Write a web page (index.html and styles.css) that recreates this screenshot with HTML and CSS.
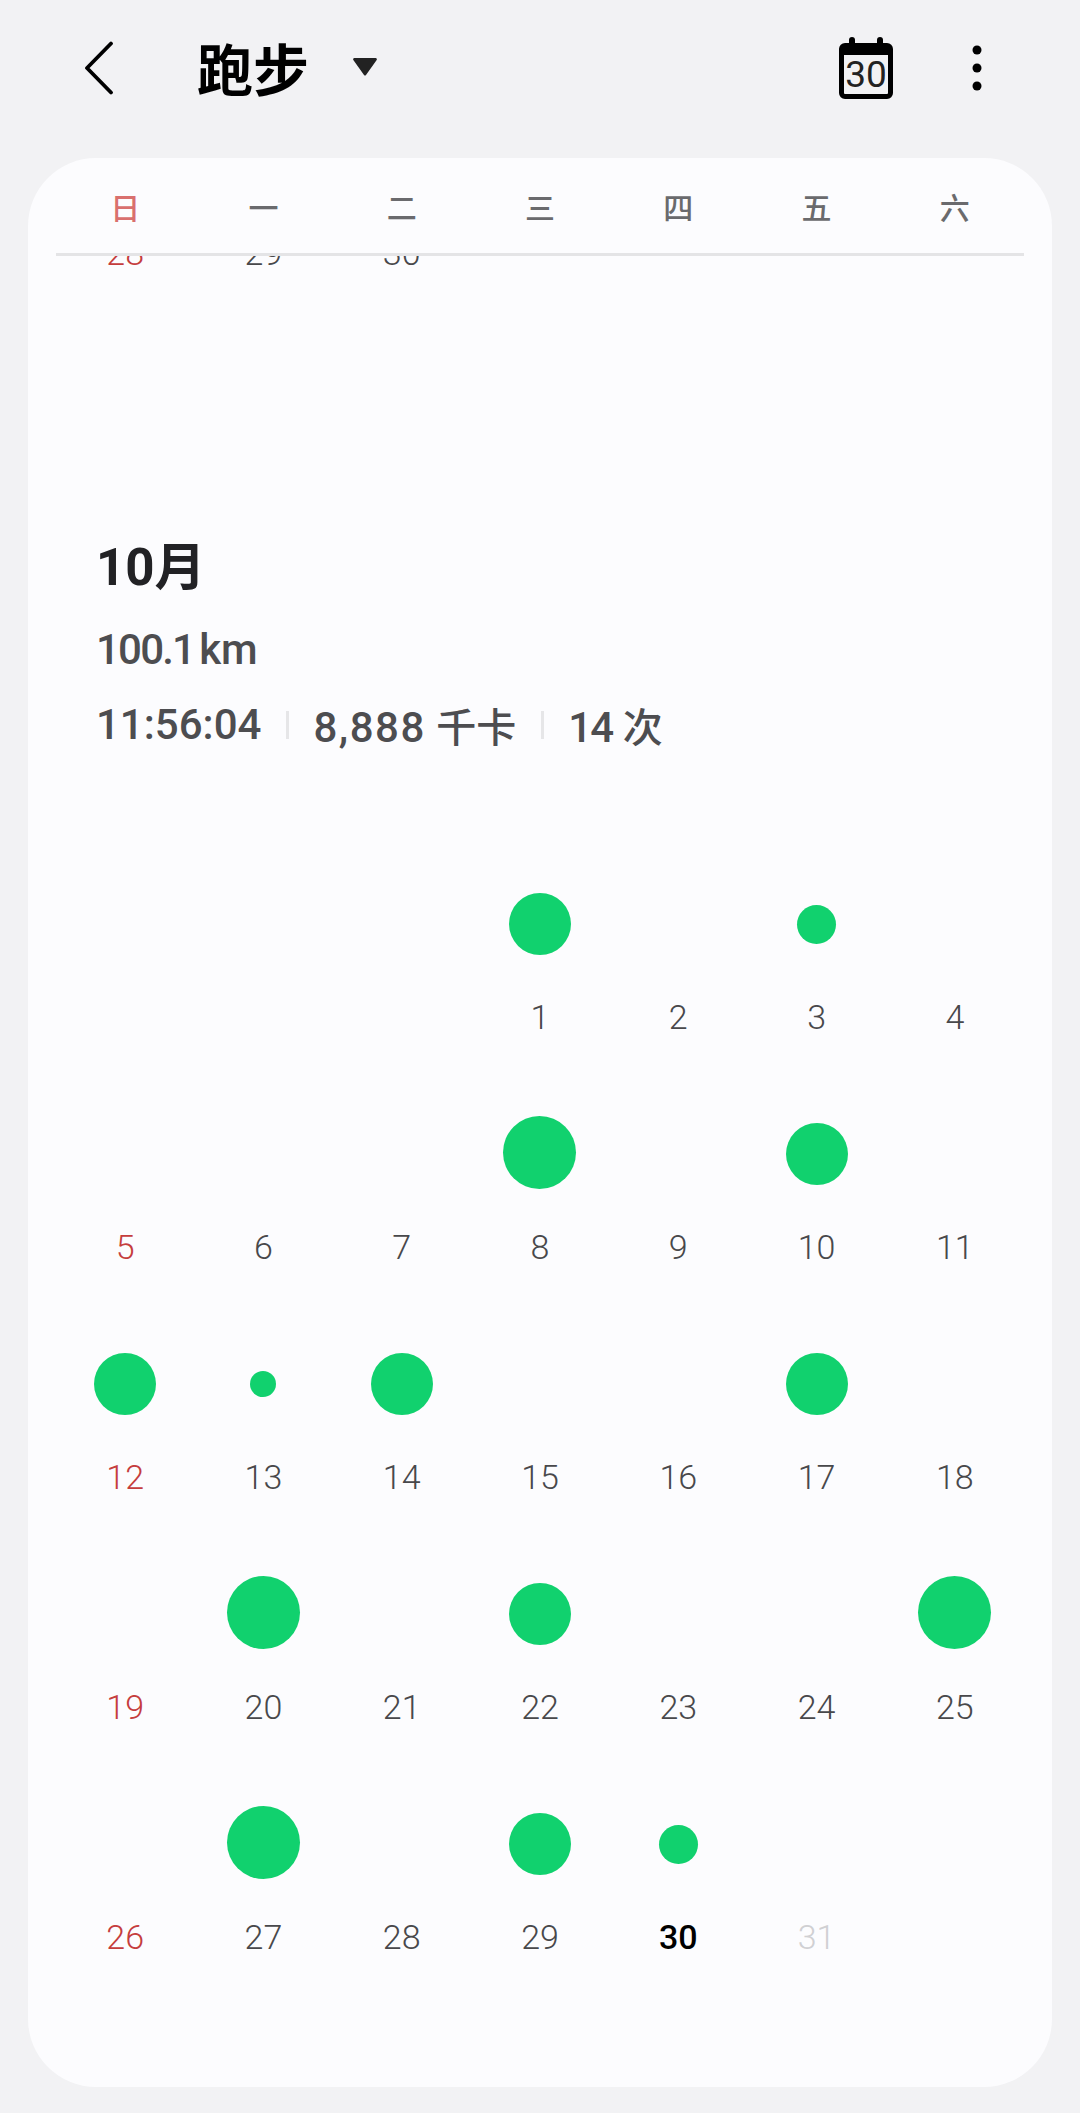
FILE: index.html
```html
<!DOCTYPE html>
<html lang="zh">
<head>
<meta charset="utf-8">
<title>跑步</title>
<link rel="stylesheet" href="styles.css">
</head>
<body>
<header class="topbar">
  <svg class="back" viewBox="0 0 30 54" width="30" height="54"><path d="M27 2.500 3 27l24 24.500" fill="none" stroke="#000" stroke-width="3.800" stroke-linecap="round" stroke-linejoin="round"/></svg>
  <h1 class="title">跑步</h1>
  <svg class="caret" viewBox="0 0 24 18" width="24" height="18"><path d="M1.500 0h21a1.300 1.300 0 0 1 1 2.200L13 17a1.300 1.300 0 0 1-2 0L.5 2.200A1.300 1.300 0 0 1 1.500 0z" fill="#222"/></svg>
  <div class="spacer"></div>
  <svg class="cal" viewBox="0 0 56 62" width="56" height="62">
    <path d="M7 6h42a6 6 0 0 1 6 6v44a6 6 0 0 1-6 6H7a6 6 0 0 1-6-6V12a6 6 0 0 1 6-6zm-1 12v38a1 1 0 0 0 1 1h42a1 1 0 0 0 1-1V18z" fill="#000" fill-rule="evenodd"/>
    <rect x="11" y="0" width="6" height="10" rx="3" fill="#000"/>
    <rect x="39" y="0" width="6" height="10" rx="3" fill="#000"/>
    <text class="cal-num" x="28" y="50" text-anchor="middle">30</text>
  </svg>
  <svg class="more" viewBox="0 0 10 46" width="10" height="46"><circle cx="5" cy="5" r="4.500"/><circle cx="5" cy="23" r="4.500"/><circle cx="5" cy="41" r="4.500"/></svg>
</header>

<main class="card">
  <div class="weekdays">
    <span class="wd wd-sun">日</span><span class="wd">一</span><span class="wd">二</span><span class="wd">三</span><span class="wd">四</span><span class="wd">五</span><span class="wd">六</span>
  </div>
  <div class="prev-row">
    <span class="num sun">28</span><span class="num">29</span><span class="num">30</span>
  </div>

  <section class="summary">
    <h2 class="month">10月</h2>
    <p class="dist"><span class="narrow">100.1</span><span class="thin"> </span>km</p>
    <div class="stats">
      <span class="stat">11:56:04</span>
      <i class="sep"></i>
      <span class="stat stat-low"><span class="wide">8,888</span> <span class="unit">千卡</span></span>
      <i class="sep"></i>
      <span class="stat stat-low"><span class="narrow">14</span> <span class="unit">次</span></span>
    </div>
  </section>

  <div class="grid">
    <div class="cell"></div><div class="cell"></div><div class="cell"></div>
    <div class="cell"><div class="slot"><i class="dot m"></i></div><span class="num">1</span></div>
    <div class="cell"><div class="slot"></div><span class="num">2</span></div>
    <div class="cell"><div class="slot"><i class="dot s"></i></div><span class="num">3</span></div>
    <div class="cell"><div class="slot"></div><span class="num">4</span></div>

    <div class="cell"><div class="slot"></div><span class="num sun">5</span></div>
    <div class="cell"><div class="slot"></div><span class="num">6</span></div>
    <div class="cell"><div class="slot"></div><span class="num">7</span></div>
    <div class="cell"><div class="slot"><i class="dot l"></i></div><span class="num">8</span></div>
    <div class="cell"><div class="slot"></div><span class="num">9</span></div>
    <div class="cell"><div class="slot"><i class="dot m"></i></div><span class="num">10</span></div>
    <div class="cell"><div class="slot"></div><span class="num">11</span></div>

    <div class="cell"><div class="slot"><i class="dot m"></i></div><span class="num sun">12</span></div>
    <div class="cell"><div class="slot"><i class="dot xs"></i></div><span class="num">13</span></div>
    <div class="cell"><div class="slot"><i class="dot m"></i></div><span class="num">14</span></div>
    <div class="cell"><div class="slot"></div><span class="num">15</span></div>
    <div class="cell"><div class="slot"></div><span class="num">16</span></div>
    <div class="cell"><div class="slot"><i class="dot m"></i></div><span class="num">17</span></div>
    <div class="cell"><div class="slot"></div><span class="num">18</span></div>

    <div class="cell"><div class="slot"></div><span class="num sun">19</span></div>
    <div class="cell"><div class="slot"><i class="dot l"></i></div><span class="num">20</span></div>
    <div class="cell"><div class="slot"></div><span class="num">21</span></div>
    <div class="cell"><div class="slot"><i class="dot m"></i></div><span class="num">22</span></div>
    <div class="cell"><div class="slot"></div><span class="num">23</span></div>
    <div class="cell"><div class="slot"></div><span class="num">24</span></div>
    <div class="cell"><div class="slot"><i class="dot l"></i></div><span class="num">25</span></div>

    <div class="cell"><div class="slot"></div><span class="num sun">26</span></div>
    <div class="cell"><div class="slot"><i class="dot l"></i></div><span class="num">27</span></div>
    <div class="cell"><div class="slot"></div><span class="num">28</span></div>
    <div class="cell"><div class="slot"><i class="dot m"></i></div><span class="num">29</span></div>
    <div class="cell"><div class="slot"><i class="dot s"></i></div><span class="num today">30</span></div>
    <div class="cell"><div class="slot"></div><span class="num future">31</span></div>
    <div class="cell"></div>
  </div>
</main>
</body>
</html>
```
FILE: styles.css
```css
* { box-sizing: border-box; }
html, body { margin: 0; padding: 0; }
body {
  width: 1080px;
  height: 2113px;
  background: #f2f2f4;
  font-family: Roboto, "Noto Sans CJK SC", sans-serif;
  overflow: hidden;
}
.topbar {
  height: 158px;
  display: flex;
  align-items: center;
  padding: 0 98px 18px 84px;
}
.back { margin-bottom: 4px; flex: none; }
.title {
  margin: 0 0 0 83px;
  font-family: "Noto Sans CJK SC", sans-serif;
  font-size: 56px;
  line-height: 70px;
  font-weight: 700;
  color: #000;
  padding-bottom: 6px;
}
.caret { margin-left: 44px; margin-bottom: 6px; flex: none; }
.spacer { flex: 1; }
.cal { margin-bottom: 4px; flex: none; }
.cal-num { font-family: Roboto, sans-serif; font-size: 37px; font-weight: 400; fill: #222; }
.more { margin-left: 78px; flex: none; fill: #000; margin-bottom: 4px; }

.card {
  margin: 0 28px;
  height: 1929px;
  background: #fcfcfe;
  border-radius: 68px;
  padding: 0 28px;
  overflow: hidden;
}
.weekdays {
  display: grid;
  grid-template-columns: repeat(7, 1fr);
  height: 98px;
  align-items: center;
  border-bottom: 3px solid #e4e4e6;
}
.wd {
  text-align: center;
  font-family: "Noto Sans CJK SC", sans-serif;
  font-size: 30px;
  line-height: 40px;
  font-weight: 500;
  color: #6a6a6d;
}
.wd-sun { color: #d9706e; }
.prev-row {
  display: grid;
  grid-template-columns: repeat(7, 1fr);
  grid-template-rows: 10px;
  height: 10px;
  overflow: hidden;
  align-items: end;
}
.num {
  display: block;
  text-align: center;
  font-size: 34px;
  line-height: 40px;
  font-weight: 350;
  color: #48484b;
}
.prev-row .num { line-height: 26px; height: 26px; }
.sun { color: #c53d3d; }
.today { color: #000; font-weight: 500; }
.future { color: #d0d0d3; }

.summary { padding: 0 0 0 40px; margin-top: 272px; }
.month {
  margin: 0;
  font-size: 51px;
  line-height: 60px;
  font-weight: 700;
  color: #222225;
  font-family: Roboto, "Noto Sans CJK SC", sans-serif;
}
.dist {
  margin: 27px 0 0;
  font-size: 42px;
  line-height: 50px;
  font-weight: 500;
  color: #4d4d50;
}
.thin { font-size: 20px; }
.narrow { letter-spacing: -1.800px; }
.wide { letter-spacing: 1.500px; }
.unit { font-size: 40px; }
.stats {
  margin-top: 18px;
  display: flex;
  align-items: flex-start;
  height: 56px;
  color: #4d4d50;
  font-size: 42px;
  line-height: 50px;
  font-weight: 500;
}
.stat { display: block; }
.stat-low { padding-top: 3px; }
.sep {
  width: 3px;
  height: 28px;
  margin: 11px 24px 0 25px;
  background: #e6e6e8;
}

.grid {
  margin-top: 131px;
  display: grid;
  grid-template-columns: repeat(7, 1fr);
  grid-auto-rows: 230px;
}
.cell { display: flex; flex-direction: column; align-items: center; }
.slot {
  height: 74px;
  width: 100%;
  display: flex;
  align-items: center;
  justify-content: center;
  margin-bottom: 36px;
}
.dot { display: block; border-radius: 50%; background: #11d16e; }
.l { width: 73px; height: 73px; margin-bottom: 3px; }
.m { width: 62px; height: 62px; }
.s { width: 39px; height: 39px; }
.xs { width: 26px; height: 26px; }
```
